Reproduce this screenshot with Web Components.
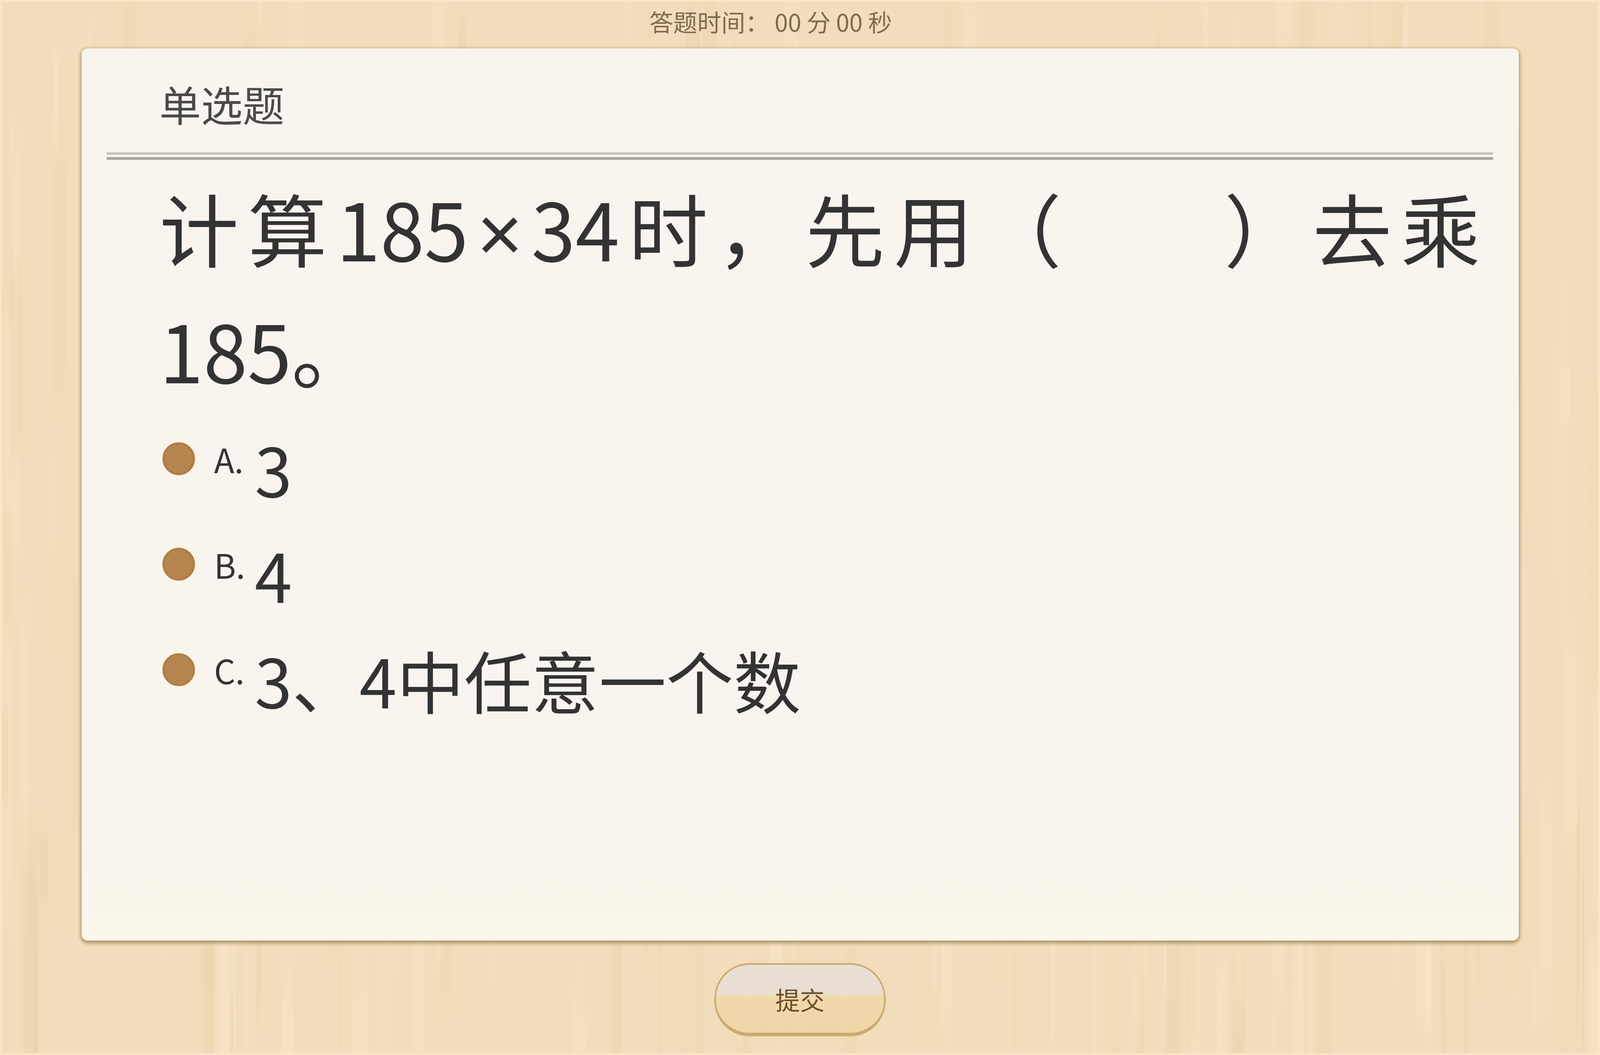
<!DOCTYPE html>
<html lang="zh">
<head>
<meta charset="utf-8">
<title>单选题</title>
<style>
  /* --u is one reference pixel across: the layout follows the window width */
  :root { --u: calc(100vw / 4799); }
  html, body { margin: 0; padding: 0; overflow: hidden; }
  body { font-family: "Noto Sans CJK SC", "Liberation Sans", sans-serif; }
</style>
</head>
<body>
<wood-board>
  <quiz-timer slot="top">答题时间：&nbsp;00 分 00 秒</quiz-timer>
  <quiz-card title-text="单选题">
    <quiz-question>计算185<span class="times">×</span>34时，先用（<span class="blank">　　</span>）去乘<span>185。</span></quiz-question>
    <quiz-option label="A.">3</quiz-option>
    <quiz-option label="B.">4</quiz-option>
    <quiz-option label="C.">3、4中任意一个数</quiz-option>
  </quiz-card>
  <quiz-button slot="bottom">提交</quiz-button>
</wood-board>

<script>
class WoodBoard extends HTMLElement {
    constructor() {
        super();
        this.attachShadow({ mode: "open" });
    }

    // grain: vertical streak patches, seeded so every run looks the same
    getGrain() {
        let seed = 7;
        const rnd = () => {
            seed = (seed * 16807) % 2147483647;
            return seed / 2147483647;
        };
        const colors = ["236,214,170", "250,226,196", "232,208,168", "248,232,204"];
        const layers = [];
        for (let i = 0; i < 320; i++) {
            const c = colors[Math.floor(rnd() * colors.length)];
            const a = (0.18 + rnd() * 0.3).toFixed(2);
            const x = (rnd() * 100).toFixed(2);
            const y = Math.round(rnd() * 2700 - 200);
            const w = Math.round(6 + rnd() * 34);
            const h = Math.round(150 + rnd() * 900);
            layers.push(`linear-gradient(rgba(${c},0),rgba(${c},${a}) 25%,rgba(${c},${a}) 75%,rgba(${c},0)) ${x}vw ${y}px / ${w}px ${h}px no-repeat`);
        }
        return layers.join(",");
    }

    connectedCallback() {
        this.shadowRoot.innerHTML = `
            <style>
                :host {
                    display: flex;
                    flex-direction: column;
                    width: 100vw;
                    height: 100vh;
                    box-sizing: border-box;
                    overflow: hidden;
                    background: ${this.getGrain()}, #f3dcbb;
                    box-shadow: inset 0 0 0 5px #fbe5c6;
                }
                .top { height: 124px; flex: none; }
                .middle { flex: none; padding: 0 calc(var(--u) * 244) 0 calc(var(--u) * 245); }
                .bottom { flex: 1; display: flex; justify-content: center; padding-top: 58px; }
            </style>
            <div class="top"><slot name="top"></slot></div>
            <div class="middle"><slot></slot></div>
            <div class="bottom"><slot name="bottom"></slot></div>
        `;
    }
}

class QuizTimer extends HTMLElement {
    constructor() {
        super();
        this.attachShadow({ mode: "open" });
        this.shadowRoot.innerHTML = `
            <style>
                :host {
                    display: block;
                    box-sizing: border-box;
                    padding: 6px calc(var(--u) * 176) 0 0;
                    text-align: center;
                    font-size: calc(var(--u) * 72);
                    line-height: 98px;
                    color: #7d6c52;
                    white-space: nowrap;
                }
            </style>
            <slot></slot>
        `;
    }
}

class QuizCard extends HTMLElement {
    constructor() {
        super();
        this.attachShadow({ mode: "open" });
        this.shadowRoot.innerHTML = `
            <style>
                :host {
                    display: block;
                    box-sizing: border-box;
                    height: 2283px;
                    padding: 0 calc(var(--u) * 77) 0 calc(var(--u) * 75);
                    background: linear-gradient(#f9f5ee 85%, #faf6ea);
                    border-radius: 16px;
                    box-shadow: 0 4px 8px 3px rgba(130,105,60,.62), inset 0 0 0 3px #fdf8ec;
                }
                h2 {
                    margin: 0;
                    height: 266px;
                    box-sizing: border-box;
                    padding: 56px 0 0 calc(var(--u) * 158);
                    font-size: calc(var(--u) * 125);
                    line-height: 170px;
                    font-weight: 400;
                    color: #4a4a48;
                }
                .rule {
                    height: 6px;
                    border-bottom: 7px solid #a8a5a0;
                    border-top: 6px solid #c5c2bb;
                    background: #f9f5ee;
                }
                .body { padding: 16px 0 0 calc(var(--u) * 158); }
            </style>
            <h2></h2>
            <div class="rule"></div>
            <div class="body"><slot></slot></div>
        `;
    }

    connectedCallback() {
        this.shadowRoot.querySelector("h2").textContent = this.getAttribute("title-text");
    }
}

class QuizQuestion extends HTMLElement {
    constructor() {
        super();
        this.attachShadow({ mode: "open" });
        this.shadowRoot.innerHTML = `
            <style>
                :host {
                    display: block;
                    margin-right: calc(var(--u) * 38);
                    margin-bottom: 51px;
                    font-size: calc(var(--u) * 238);
                    line-height: 312px;
                    color: #333;
                    text-align: justify;
                }
                ::slotted(.times) {
                    font-family: "Liberation Sans", sans-serif;
                    line-height: 0;
                    margin: 0 calc(var(--u) * 25);
                }
                ::slotted(.blank) {
                    letter-spacing: calc(var(--u) * -35);
                }
            </style>
            <slot></slot>
        `;
    }
}

class QuizOption extends HTMLElement {
    constructor() {
        super();
        this.attachShadow({ mode: "open" });
        this.shadowRoot.innerHTML = `
            <style>
                :host {
                    display: flex;
                    height: 270px;
                    color: #333;
                }
                .dot {
                    flex: none;
                    width: calc(var(--u) * 98);
                    height: calc(var(--u) * 98);
                    margin: calc(74px - var(--u) * 49) 0 0 calc(var(--u) * 9);
                    box-sizing: border-box;
                    border-radius: 50%;
                    background: #b5854f;
                    border: 5px solid #ae7d45;
                    box-shadow: 0 0 3px #f5d7a8;
                }
                .label {
                    flex: none;
                    width: calc(var(--u) * 179);
                    padding-left: calc(var(--u) * 57);
                    box-sizing: border-box;
                    font-size: calc(var(--u) * 100);
                    line-height: 148px;
                }
                .text {
                    font-size: calc(var(--u) * 202);
                    line-height: 196px;
                    white-space: nowrap;
                }
            </style>
            <span class="dot"></span>
            <span class="label"></span>
            <span class="text"><slot></slot></span>
        `;
    }

    connectedCallback() {
        this.shadowRoot.querySelector(".label").textContent = this.getAttribute("label");
    }
}

class QuizButton extends HTMLElement {
    constructor() {
        super();
        this.attachShadow({ mode: "open" });
        this.shadowRoot.innerHTML = `
            <style>
                :host {
                    display: flex;
                    align-items: center;
                    justify-content: center;
                    box-sizing: border-box;
                    width: calc(var(--u) * 513);
                    height: 187px;
                    border-radius: 90px;
                    border: 4px solid #cbaa6e;
                    border-bottom-width: 9px;
                    background: linear-gradient(#e9e0d3 0, #e9e0d3 44%, #f0d9ad 45%, #efd6a8 100%);
                    font-size: calc(var(--u) * 74);
                    color: #6b4e2a;
                }
            </style>
            <slot></slot>
        `;
    }
}

customElements.define("wood-board", WoodBoard);
customElements.define("quiz-timer", QuizTimer);
customElements.define("quiz-card", QuizCard);
customElements.define("quiz-question", QuizQuestion);
customElements.define("quiz-option", QuizOption);
customElements.define("quiz-button", QuizButton);
</script>
</body>
</html>
